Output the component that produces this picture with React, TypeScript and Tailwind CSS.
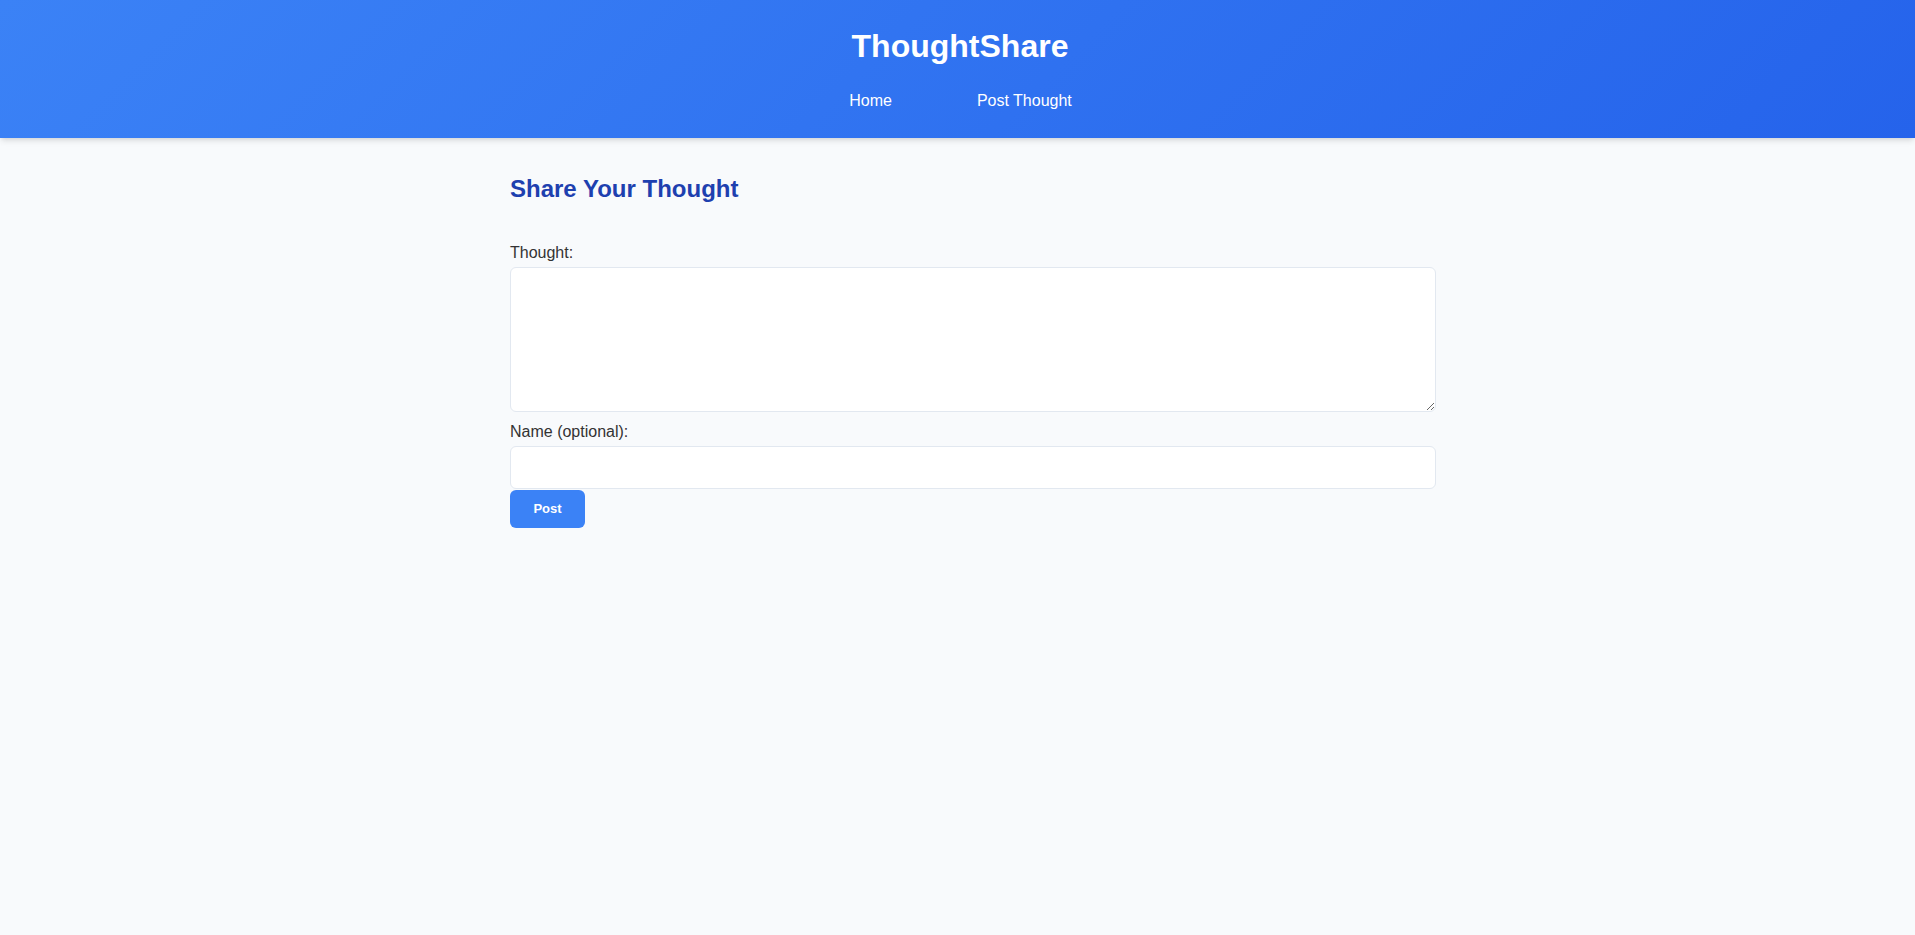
import React, { useState } from 'react';

const App: React.FC = () => {
  const [thought, setThought] = useState('');
  const [name, setName] = useState('');

  return (
    <div className="min-h-screen bg-[#f8fafc] font-['Liberation_Sans',Arial,sans-serif] text-[#333]">
      {/* Header */}
      <header className="relative z-10 h-[138px] bg-[linear-gradient(135deg,#3b82f6,#2563eb)] pt-[28px] pl-[5px] shadow-md">
        <h1 className="text-center text-[32px] leading-[36px] font-bold text-white">ThoughtShare</h1>
        <nav className="mt-[28px] flex justify-center gap-[85px] pl-[1px]">
          <a href="#" className="text-[16px] leading-[18px] text-white">Home</a>
          <a href="#" className="text-[16px] leading-[18px] text-white">Post Thought</a>
        </nav>
      </header>

      {/* Main */}
      <main className="pl-[5px]">
        <div className="mx-auto w-[900px] pt-[37px]">
          <h2 className="text-[24px] leading-[28px] font-bold text-[#1e40af]">Share Your Thought</h2>

          <form className="mt-[41px] flex flex-col" onSubmit={(e) => e.preventDefault()}>
            <label htmlFor="thought" className="mb-[5px] block text-[16px] leading-[18px]">Thought:</label>
            <textarea
              id="thought"
              value={thought}
              onChange={(e) => setThought(e.target.value)}
              className="box-content block h-[119px] w-full resize-y rounded-md border border-[#e2e8f0] bg-white px-3 py-3 text-[16px] focus:outline-none"
            />

            <label htmlFor="name" className="mt-[11px] mb-[5px] block text-[16px] leading-[18px]">Name (optional):</label>
            <input
              id="name"
              type="text"
              value={name}
              onChange={(e) => setName(e.target.value)}
              className="box-content block h-[17px] w-full rounded-md border border-[#e2e8f0] bg-white px-3 py-3 text-[16px] focus:outline-none"
            />

            <button
              type="submit"
              className="mt-[1px] flex h-[38px] w-[75px] items-center justify-center rounded-md bg-[#3b82f6] text-[13px] font-semibold text-white"
            >
              Post
            </button>
          </form>
        </div>
      </main>
    </div>
  );
};

export default App;
